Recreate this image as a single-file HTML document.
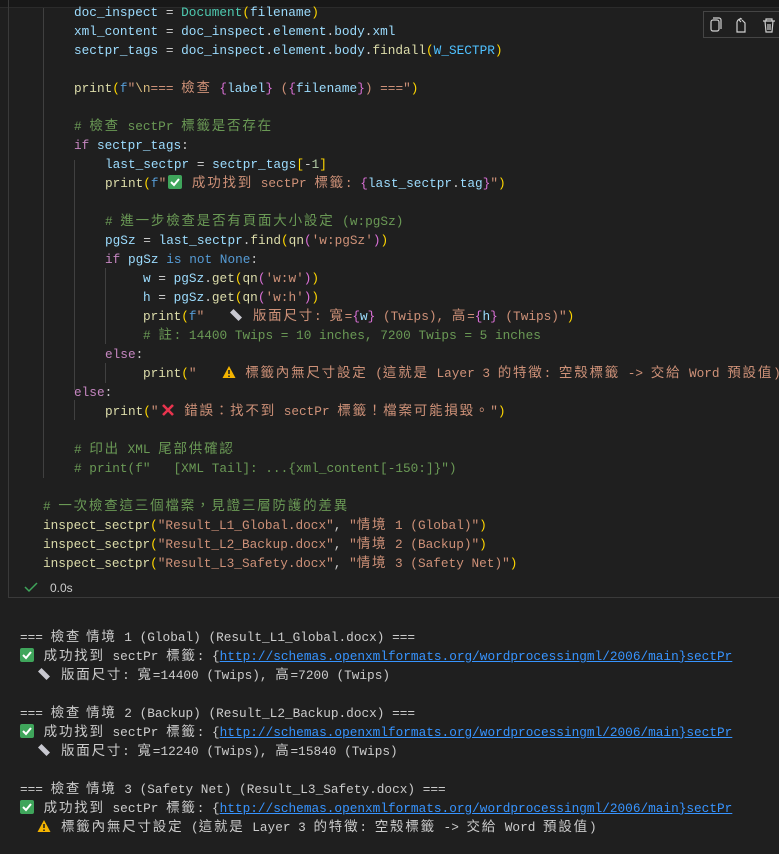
<!DOCTYPE html>
<html><head><meta charset="utf-8"><style>
body{margin:0;width:779px;height:854px;background:#1f1f1f;overflow:hidden;position:relative;font-family:"Liberation Mono","Noto Sans CJK TC",monospace;font-size:12.75px;color:#cccccc}
.l{position:absolute;height:19px;line-height:19px;white-space:pre}
.c{font-family:"Noto Sans CJK TC",sans-serif;font-size:13.5px;letter-spacing:1.8px;line-height:0}
.k{color:#c586c0}.b{color:#569cd6}.f{color:#dcdcaa}.v{color:#9cdcfe}.s{color:#ce9178}.m{color:#6a9955}.y{color:#ffd700}.p{color:#da70d6}.n{color:#b5cea8}.e{color:#d7ba7d}.t{color:#4ec9b0}.q{color:#4fc1ff}.w{color:#d4d4d4}
.g{position:absolute;width:1px;background:#404040}
.a{color:#3794ff;text-decoration:underline}
.ic{display:inline-block;vertical-align:-2px;width:14px;height:14px;margin:0 2px;line-height:0}
</style></head><body>
<div style="position:absolute;left:0;top:0;width:779px;height:7px;background:#181818;border-bottom:1px solid #2b2b2b"></div>
<div style="position:absolute;left:8px;top:-2px;width:790px;height:600px;border:1px solid #3a3a3a;box-sizing:border-box"></div>
<div style="position:absolute;left:703px;top:11px;width:90px;height:27px;border:1px solid #454545;box-sizing:border-box"></div>
<svg style="position:absolute;left:708px;top:16px" width="71" height="18" fill="none" stroke="#d0d0d0" stroke-width="1.2">
<rect x="3" y="4" width="8" height="11" rx="2"/><path d="M5 2h6a2 2 0 0 1 2 2v9"/>
<path d="M29 6v10h8V7l-3-3M29 6a4 4 0 0 1 5-3M31 4l2 -2M31 4l2 2"/>
<path d="M55 5h12M58 5V3h6v2M57 5l1 11h6l1-11M60 8v6M62 8v6"/>
</svg>
<div class="g" style="left:43px;top:8px;height:470px"></div>
<div class="g" style="left:74px;top:160px;height:230px"></div>
<div class="g" style="left:74px;top:400px;height:20px"></div>
<div class="g" style="left:105px;top:268px;height:76px"></div>
<div class="g" style="left:105px;top:363px;height:20px"></div>

<div class="l" style="left:74px;top:3px"><span class="v">doc_inspect</span> = <span class="t">Document</span><span class="y">(</span><span class="v">filename</span><span class="y">)</span></div>
<div class="l" style="left:74px;top:22px"><span class="v">xml_content</span> = <span class="v">doc_inspect</span>.<span class="v">element</span>.<span class="v">body</span>.<span class="v">xml</span></div>
<div class="l" style="left:74px;top:41px"><span class="v">sectpr_tags</span> = <span class="v">doc_inspect</span>.<span class="v">element</span>.<span class="v">body</span>.<span class="f">findall</span><span class="y">(</span><span class="q">W_SECTPR</span><span class="y">)</span></div>
<div class="l" style="left:74px;top:79px"><span class="f">print</span><span class="y">(</span><span class="b">f</span><span class="s">"</span><span class="e">\n</span><span class="s">=== <span class="c">檢查</span> </span><span class="p">{</span><span class="v">label</span><span class="p">}</span><span class="s"> (</span><span class="p">{</span><span class="v">filename</span><span class="p">}</span><span class="s">) ==="</span><span class="y">)</span></div>
<div class="l m" style="left:74px;top:117px"># <span class="c">檢查</span> sectPr <span class="c">標籤是否存在</span></div>
<div class="l" style="left:74px;top:136px"><span class="k">if</span> <span class="v">sectpr_tags</span>:</div>
<div class="l" style="left:105px;top:155px"><span class="v">last_sectpr</span> = <span class="v">sectpr_tags</span><span class="y">[</span>-<span class="n">1</span><span class="y">]</span></div>
<div class="l" style="left:105px;top:174px"><span class="f">print</span><span class="y">(</span><span class="b">f</span><span class="s">"</span><svg class="ic" viewBox="0 0 14 14"><rect width="14" height="14" rx="2" fill="#3fa55b"/><path d="M3 7l3 3 5-6" stroke="#fff" stroke-width="2" fill="none"/></svg><span class="s"> <span class="c">成功找到</span> sectPr <span class="c">標籤</span>: </span><span class="p">{</span><span class="v">last_sectpr</span>.<span class="v">tag</span><span class="p">}</span><span class="s">"</span><span class="y">)</span></div>
<div class="l m" style="left:105px;top:212px"># <span class="c">進一步檢查是否有頁面大小設定</span> (w:pgSz)</div>
<div class="l" style="left:105px;top:231px"><span class="v">pgSz</span> = <span class="v">last_sectpr</span>.<span class="f">find</span><span class="y">(</span><span class="f">qn</span><span class="p">(</span><span class="s">'w:pgSz'</span><span class="p">)</span><span class="y">)</span></div>
<div class="l" style="left:105px;top:250px"><span class="k">if</span> <span class="v">pgSz</span> <span class="b">is not None</span>:</div>
<div class="l" style="left:143px;top:269px"><span class="v">w</span> = <span class="v">pgSz</span>.<span class="f">get</span><span class="y">(</span><span class="f">qn</span><span class="p">(</span><span class="s">'w:w'</span><span class="p">)</span><span class="y">)</span></div>
<div class="l" style="left:143px;top:288px"><span class="v">h</span> = <span class="v">pgSz</span>.<span class="f">get</span><span class="y">(</span><span class="f">qn</span><span class="p">(</span><span class="s">'w:h'</span><span class="p">)</span><span class="y">)</span></div>
<div class="l" style="left:143px;top:307px"><span class="f">print</span><span class="y">(</span><span class="b">f</span><span class="s">"   </span><svg class="ic" viewBox="0 0 14 14"><path d="M1 4.5L4.5 1 13 9.5 9.5 13z" fill="#c8c8d0"/></svg><span class="s"> <span class="c">版面尺寸</span>: <span class="c">寬</span>=</span><span class="p">{</span><span class="v">w</span><span class="p">}</span><span class="s"> (Twips), <span class="c">高</span>=</span><span class="p">{</span><span class="v">h</span><span class="p">}</span><span class="s"> (Twips)"</span><span class="y">)</span></div>
<div class="l m" style="left:143px;top:326px"># <span class="c">註</span>: 14400 Twips = 10 inches, 7200 Twips = 5 inches</div>
<div class="l" style="left:105px;top:345px"><span class="k">else</span>:</div>
<div class="l" style="left:143px;top:364px"><span class="f">print</span><span class="y">(</span><span class="s">"   </span><svg class="ic" viewBox="0 0 14 14"><path d="M7 1L13.5 13H.5z" fill="#f4b400"/><path d="M7 5v4M7 10.5v1.5" stroke="#222" stroke-width="1.6"/></svg><span class="s"> <span class="c">標籤內無尺寸設定</span> (<span class="c">這就是</span> Layer 3 <span class="c">的特徵</span>: <span class="c">空殼標籤</span> -&gt; <span class="c">交給</span> Word <span class="c">預設值</span>)"</span><span class="y">)</span></div>
<div class="l" style="left:74px;top:383px"><span class="k">else</span>:</div>
<div class="l" style="left:105px;top:402px"><span class="f">print</span><span class="y">(</span><span class="s">"</span><svg class="ic" viewBox="0 0 14 14"><path d="M2 2l10 10M12 2L2 12" stroke="#e8344e" stroke-width="2.6"/></svg><span class="s"> <span class="c">錯誤：找不到</span> sectPr <span class="c">標籤！檔案可能損毀。</span>"</span><span class="y">)</span></div>
<div class="l m" style="left:74px;top:440px"># <span class="c">印出</span> XML <span class="c">尾部供確認</span></div>
<div class="l m" style="left:74px;top:459px"># print(f"   [XML Tail]: ...{xml_content[-150:]}")</div>
<div class="l m" style="left:43px;top:497px"># <span class="c">一次檢查這三個檔案，見證三層防護的差異</span></div>
<div class="l" style="left:43px;top:516px"><span class="f">inspect_sectpr</span><span class="y">(</span><span class="s">"Result_L1_Global.docx"</span>, <span class="s">"<span class="c">情境</span> 1 (Global)"</span><span class="y">)</span></div>
<div class="l" style="left:43px;top:535px"><span class="f">inspect_sectpr</span><span class="y">(</span><span class="s">"Result_L2_Backup.docx"</span>, <span class="s">"<span class="c">情境</span> 2 (Backup)"</span><span class="y">)</span></div>
<div class="l" style="left:43px;top:554px"><span class="f">inspect_sectpr</span><span class="y">(</span><span class="s">"Result_L3_Safety.docx"</span>, <span class="s">"<span class="c">情境</span> 3 (Safety Net)"</span><span class="y">)</span></div>
<svg style="position:absolute;left:24px;top:581px" width="14" height="12"><path d="M1 6l4 4 8-8" stroke="#3fa55b" stroke-width="1.5" fill="none"/></svg>
<div class="l" style="left:50px;top:579px;font-family:'Liberation Sans',sans-serif;font-size:12px">0.0s</div>

<div class="l" style="left:20px;top:628px">=== <span class="c">檢查 情境</span> 1 (Global) (Result_L1_Global.docx) ===</div>
<div class="l" style="left:20px;top:647px"><svg class="ic" style="margin-left:0" viewBox="0 0 14 14"><rect width="14" height="14" rx="2" fill="#3fa55b"/><path d="M3 7l3 3 5-6" stroke="#fff" stroke-width="2" fill="none"/></svg> <span class="c">成功找到</span> sectPr <span class="c">標籤</span>: {<span class="a">http://schemas.openxmlformats.org/wordprocessingml/2006/main}sectPr</span></div>
<div class="l" style="left:20px;top:666px">  <svg class="ic" viewBox="0 0 14 14"><path d="M1 4.5L4.5 1 13 9.5 9.5 13z" fill="#c8c8d0"/></svg> <span class="c">版面尺寸</span>: <span class="c">寬</span>=14400 (Twips), <span class="c">高</span>=7200 (Twips)</div>
<div class="l" style="left:20px;top:704px">=== <span class="c">檢查 情境</span> 2 (Backup) (Result_L2_Backup.docx) ===</div>
<div class="l" style="left:20px;top:723px"><svg class="ic" style="margin-left:0" viewBox="0 0 14 14"><rect width="14" height="14" rx="2" fill="#3fa55b"/><path d="M3 7l3 3 5-6" stroke="#fff" stroke-width="2" fill="none"/></svg> <span class="c">成功找到</span> sectPr <span class="c">標籤</span>: {<span class="a">http://schemas.openxmlformats.org/wordprocessingml/2006/main}sectPr</span></div>
<div class="l" style="left:20px;top:742px">  <svg class="ic" viewBox="0 0 14 14"><path d="M1 4.5L4.5 1 13 9.5 9.5 13z" fill="#c8c8d0"/></svg> <span class="c">版面尺寸</span>: <span class="c">寬</span>=12240 (Twips), <span class="c">高</span>=15840 (Twips)</div>
<div class="l" style="left:20px;top:780px">=== <span class="c">檢查 情境</span> 3 (Safety Net) (Result_L3_Safety.docx) ===</div>
<div class="l" style="left:20px;top:799px"><svg class="ic" style="margin-left:0" viewBox="0 0 14 14"><rect width="14" height="14" rx="2" fill="#3fa55b"/><path d="M3 7l3 3 5-6" stroke="#fff" stroke-width="2" fill="none"/></svg> <span class="c">成功找到</span> sectPr <span class="c">標籤</span>: {<span class="a">http://schemas.openxmlformats.org/wordprocessingml/2006/main}sectPr</span></div>
<div class="l" style="left:20px;top:818px">  <svg class="ic" viewBox="0 0 14 14"><path d="M7 1L13.5 13H.5z" fill="#f4b400"/><path d="M7 5v4M7 10.5v1.5" stroke="#222" stroke-width="1.6"/></svg> <span class="c">標籤內無尺寸設定</span> (<span class="c">這就是</span> Layer 3 <span class="c">的特徵</span>: <span class="c">空殼標籤</span> -&gt; <span class="c">交給</span> Word <span class="c">預設值</span>)</div>
</body></html>
